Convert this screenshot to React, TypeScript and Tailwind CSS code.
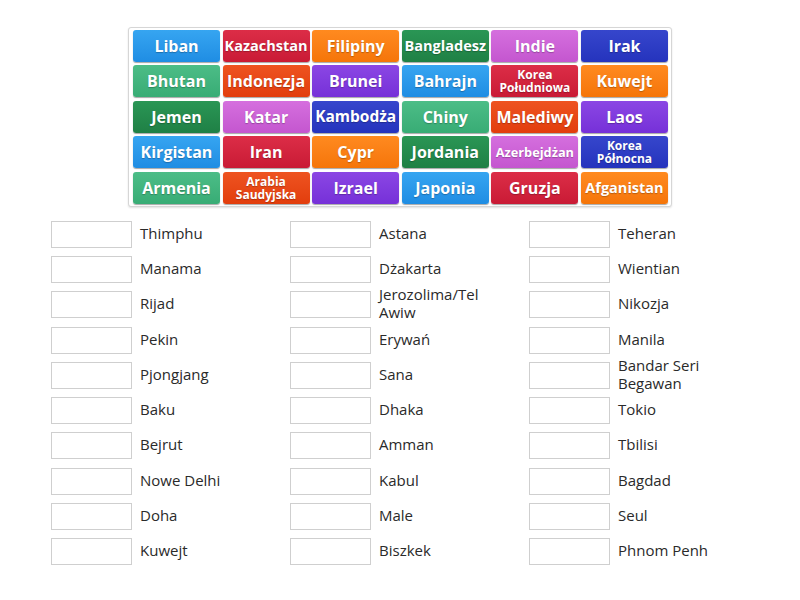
import React from 'react';

type Tone = 'blue' | 'red' | 'orange' | 'dkgreen' | 'pink' | 'navy' | 'green' | 'redorange' | 'purple';

const tones: Record<Tone, string> = {
  blue: 'bg-linear-to-b from-[#36a5f1] to-[#1f8de3]',
  red: 'bg-linear-to-b from-[#dc2d47] to-[#c91a35]',
  orange: 'bg-linear-to-b from-[#ff8a1f] to-[#f57508]',
  dkgreen: 'bg-linear-to-b from-[#2a9655] to-[#1f8045]',
  pink: 'bg-linear-to-b from-[#d56fde] to-[#c456cf]',
  navy: 'bg-linear-to-b from-[#3646cc] to-[#2533bd]',
  green: 'bg-linear-to-b from-[#4cbd87] to-[#38ac75]',
  redorange: 'bg-linear-to-b from-[#ee5320] to-[#e23d0c]',
  purple: 'bg-linear-to-b from-[#8b46e4] to-[#7630d8]',
};

type Tile = { label: string; tone: Tone; size?: string; twoLine?: boolean };

const tiles: Tile[] = [
  { label: 'Liban', tone: 'blue' },
  { label: 'Kazachstan', tone: 'red', size: 'text-[14.5px]' },
  { label: 'Filipiny', tone: 'orange' },
  { label: 'Bangladesz', tone: 'dkgreen', size: 'text-[14.5px]' },
  { label: 'Indie', tone: 'pink' },
  { label: 'Irak', tone: 'navy' },

  { label: 'Bhutan', tone: 'green' },
  { label: 'Indonezja', tone: 'redorange' },
  { label: 'Brunei', tone: 'purple' },
  { label: 'Bahrajn', tone: 'blue' },
  { label: 'Korea Południowa', tone: 'red', size: 'text-[12px] leading-[13px]', twoLine: true },
  { label: 'Kuwejt', tone: 'orange' },

  { label: 'Jemen', tone: 'dkgreen' },
  { label: 'Katar', tone: 'pink' },
  { label: 'Kambodża', tone: 'navy', size: 'text-[15.5px]' },
  { label: 'Chiny', tone: 'green' },
  { label: 'Malediwy', tone: 'redorange' },
  { label: 'Laos', tone: 'purple' },

  { label: 'Kirgistan', tone: 'blue' },
  { label: 'Iran', tone: 'red' },
  { label: 'Cypr', tone: 'orange' },
  { label: 'Jordania', tone: 'dkgreen' },
  { label: 'Azerbejdżan', tone: 'pink', size: 'text-[12.75px]' },
  { label: 'Korea Północna', tone: 'navy', size: 'text-[12px] leading-[13px]', twoLine: true },

  { label: 'Armenia', tone: 'green' },
  { label: 'Arabia Saudyjska', tone: 'redorange', size: 'text-[12px] leading-[13px]', twoLine: true },
  { label: 'Izrael', tone: 'purple' },
  { label: 'Japonia', tone: 'blue' },
  { label: 'Gruzja', tone: 'red' },
  { label: 'Afganistan', tone: 'orange', size: 'text-[14.5px]' },
];

const columns: string[][] = [
  ['Thimphu', 'Manama', 'Rijad', 'Pekin', 'Pjongjang', 'Baku', 'Bejrut', 'Nowe Delhi', 'Doha', 'Kuwejt'],
  ['Astana', 'Dżakarta', 'Jerozolima/Tel Awiw', 'Erywań', 'Sana', 'Dhaka', 'Amman', 'Kabul', 'Male', 'Biszkek'],
  ['Teheran', 'Wientian', 'Nikozja', 'Manila', 'Bandar Seri Begawan', 'Tokio', 'Tbilisi', 'Bagdad', 'Seul', 'Phnom Penh'],
];

function TileBox({ label, tone, size, twoLine }: Tile) {
  return (
    <div
      className={`${tones[tone]} ${size ?? 'text-[16px]'} flex items-center justify-center rounded-[3px] text-center font-bold text-white shadow-[0_1px_1px_rgba(0,0,0,0.35)] [text-shadow:0_1px_1px_rgba(0,0,0,0.25)]`}
    >
      <span className={twoLine ? 'w-[72px]' : 'whitespace-nowrap'}>{label}</span>
    </div>
  );
}

export default function App() {
  return (
    <div className="h-[600px] w-[800px] bg-white pt-[27px] font-['Open_Sans',sans-serif]">
      <div className="mx-auto w-[544px] rounded-[3px] border border-[#d6d6d6] bg-white px-[4px] py-[2px] shadow-[0_1px_2px_rgba(0,0,0,0.12)]">
        <div className="grid grid-cols-[repeat(6,87px)] grid-rows-[repeat(5,32px)] gap-x-[2.6px] gap-y-[3.4px]">
          {tiles.map((t) => (
            <TileBox key={t.label} {...t} />
          ))}
        </div>
      </div>

      <div className="mt-[10px] grid grid-cols-[repeat(3,239px)] pl-[51px]">
        {columns.map((col, ci) => (
          <div key={ci} className="flex flex-col">
            {col.map((city) => (
              <div key={city} className="flex h-[35.3px] items-center">
                <div className="h-[27px] w-[81px] shrink-0 border border-[#cfcfcf] bg-white" />
                <span className="ml-[8px] -mt-[3px] w-[115px] text-[15px] leading-[18px] text-[#2a2a2a]">{city}</span>
              </div>
            ))}
          </div>
        ))}
      </div>
    </div>
  );
}
